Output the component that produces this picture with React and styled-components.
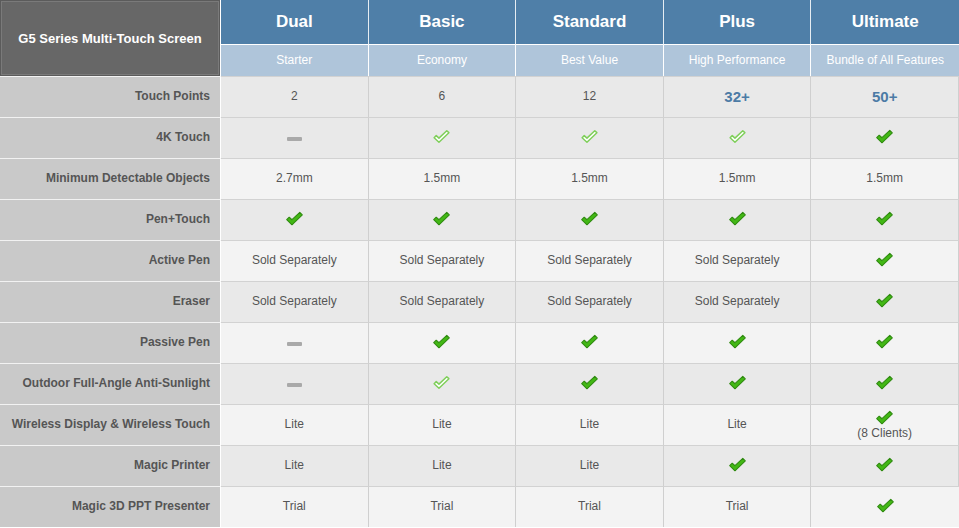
import React from 'react'
import styled, { createGlobalStyle } from 'styled-components'

const GlobalStyle = createGlobalStyle`
  html, body { margin: 0; padding: 0; background: #ffffff; }
  body { font-family: "Liberation Sans", Arial, sans-serif; }
`;

const plans = [
  { name: 'Dual', tag: 'Starter' },
  { name: 'Basic', tag: 'Economy' },
  { name: 'Standard', tag: 'Best Value' },
  { name: 'Plus', tag: 'High Performance' },
  { name: 'Ultimate', tag: 'Bundle of All Features' },
];

// y = filled check, o = outline check, n = dash
const rows = [
  { label: 'Touch Points', cells: ['2', '6', '12', { big: '32+' }, { big: '50+' }] },
  { label: '4K Touch', cells: ['n', 'o', 'o', 'o', 'y'] },
  { label: 'Minimum Detectable Objects', cells: ['2.7mm', '1.5mm', '1.5mm', '1.5mm', '1.5mm'] },
  { label: 'Pen+Touch', cells: ['y', 'y', 'y', 'y', 'y'] },
  { label: 'Active Pen', cells: ['Sold Separately', 'Sold Separately', 'Sold Separately', 'Sold Separately', 'y'] },
  { label: 'Eraser', cells: ['Sold Separately', 'Sold Separately', 'Sold Separately', 'Sold Separately', 'y'] },
  { label: 'Passive Pen', cells: ['n', 'y', 'y', 'y', 'y'] },
  { label: 'Outdoor Full-Angle Anti-Sunlight', cells: ['n', 'o', 'y', 'y', 'y'] },
  { label: 'Wireless Display & Wireless Touch', cells: ['Lite', 'Lite', 'Lite', 'Lite', { check: true, note: '(8 Clients)' }] },
  { label: 'Magic Printer', cells: ['Lite', 'Lite', 'Lite', 'y', 'y'] },
  { label: 'Magic 3D PPT Presenter', cells: ['Trial', 'Trial', 'Trial', 'Trial', 'y'] },
];

function Check({ outline }) {
  if (outline) {
    return (
      <svg width="19" height="16" viewBox="0 0 18 15">
        <path d="M2 8.2 L6.6 12.4 L16 3.4 L14 1.6 L6.6 8.6 L4 6.2 Z"
          fill="#ffffff" stroke="#7fcf5a" strokeWidth="1.4" strokeLinejoin="round" />
      </svg>
    );
  }
  return (
    <svg width="19" height="16" viewBox="0 0 18 15">
      <path d="M1.6 8.2 L6.6 13 L16.4 3.6 L14 1.2 L6.6 8.2 L4 5.8 Z"
        fill="#43b815" stroke="#2f8a10" strokeWidth="1" strokeLinejoin="round" />
    </svg>
  );
}

function CellContent({ value }) {
  if (value === 'y') return <Check />;
  if (value === 'o') return <Check outline />;
  if (value === 'n') return <Dash />;
  if (typeof value === 'object' && value.big) return <Big>{value.big}</Big>;
  if (typeof value === 'object' && value.check) {
    return (
      <Stack>
        <Check />
        <span>{value.note}</span>
      </Stack>
    );
  }
  return <span>{value}</span>;
}

function App() {
  return (
    <>
      <GlobalStyle />
      <Table>
        <Corner>G5 Series Multi-Touch Screen</Corner>
        {plans.map((p) => (
          <PlanName key={p.name}>{p.name}</PlanName>
        ))}
        {plans.map((p) => (
          <PlanTag key={p.tag}>{p.tag}</PlanTag>
        ))}
        {rows.map((r, i) => (
          <React.Fragment key={r.label}>
            <Label>{r.label}</Label>
            {r.cells.map((c, j) => (
              <Cell key={j} $light={i > 0 && i % 2 === 0}>
                <CellContent value={c} />
              </Cell>
            ))}
          </React.Fragment>
        ))}
      </Table>
    </>
  );
}

const Table = styled.div`
  display: grid;
  grid-template-columns: 221px repeat(5, 1fr);
  grid-template-rows: 45px 31px repeat(11, 41px);
  width: 959px;
  font-size: 12px;
  color: #555555;
`;

const Corner = styled.div`
  grid-row: span 2;
  display: flex;
  align-items: center;
  justify-content: center;
  background: #676767;
  color: #ffffff;
  font-weight: bold;
  font-size: 13px;
  box-shadow: inset 0 0 0 1px #5b5b5b, inset 0 0 0 2px #7a7a7a;
  border-right: 1px solid #ffffff;
`;

const PlanName = styled.div`
  display: flex;
  align-items: center;
  justify-content: center;
  background: #4f7fa8;
  color: #ffffff;
  font-weight: bold;
  font-size: 17px;
  padding-bottom: 1px;
  border-right: 1px solid #e6edf3;
  border-bottom: 1px solid #ffffff;
  &:nth-child(6) { border-right: none; }
`;

const PlanTag = styled.div`
  display: flex;
  align-items: center;
  justify-content: center;
  background: #afc5da;
  color: #ffffff;
  font-size: 12px;
  padding-bottom: 2px;
  border-right: 1px solid #ffffff;
  &:nth-child(11) { border-right: none; }
`;

const Label = styled.div`
  display: flex;
  align-items: center;
  justify-content: flex-end;
  padding-right: 10px;
  padding-bottom: 2px;
  background: #c9c9c9;
  color: #555555;
  font-weight: bold;
  font-size: 12px;
  border-top: 1px solid #f2f2f2;
  border-right: 1px solid #ffffff;
`;

const Cell = styled.div`
  display: flex;
  align-items: center;
  justify-content: center;
  padding-bottom: 2px;
  background: ${({ $light }) => ($light ? '#f3f3f3' : '#e9e9e9')};
  border-top: 1px solid #d2d2d2;
  border-right: 1px solid #cfcfcf;
  &:last-child { border-right: none; }
`;

const Dash = styled.span`
  display: block;
  width: 15px;
  height: 4px;
  border-radius: 1px;
  background: #a9a9a9;
  margin-top: 4px;
`;

const Big = styled.span`
  color: #4c7ba5;
  font-weight: bold;
  font-size: 15px;
`;

const Stack = styled.div`
  display: flex;
  flex-direction: column;
  align-items: center;
  gap: 0;
  margin-top: 1px;
`;

export default App
